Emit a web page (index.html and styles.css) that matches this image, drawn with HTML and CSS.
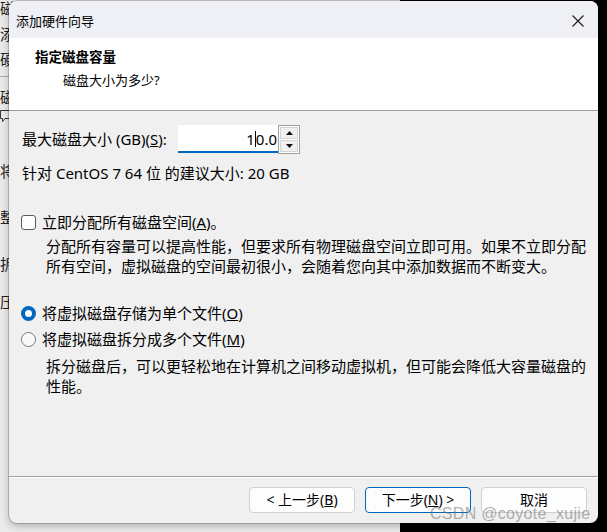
FILE: index.html
```html
<!DOCTYPE html>
<html lang="zh-CN">
<head>
<meta charset="utf-8">
<title>添加硬件向导</title>
<link rel="stylesheet" href="styles.css">
</head>
<body>
<div class="backdrop">
  <div class="bg-col">
    <span class="bg-ch c1">磁</span>
    <span class="bg-ch c2">添</span>
    <span class="bg-ch c3">硬</span>
    <span class="bg-rule"></span>
    <span class="bg-ch c4">磁</span>
    <span class="bg-ch c5"><svg width="10" height="14" viewBox="0 0 10 14"><path d="M0.5 1.5 H9.5 V9.5 H5 L2.5 12.5 V9.5 H0.5 Z" fill="none" stroke="#333" stroke-width="1"/></svg></span>
    <span class="bg-ch c6">将</span>
    <span class="bg-ch c7">整</span>
    <span class="bg-ch c8">拆</span>
    <span class="bg-ch c9">压</span>
  </div>
</div>

<div class="dialog">
  <div class="titlebar">
    <span class="title">添加硬件向导</span>
    <svg class="close" width="12" height="12" viewBox="0 0 12 12"><path d="M0.5 0.5 L11.5 11.5 M11.5 0.5 L0.5 11.5" stroke="#1a1a1a" stroke-width="1.1" fill="none"/></svg>
  </div>
  <div class="header">
    <div class="h-title">指定磁盘容量</div>
    <div class="h-sub">磁盘大小为多少?</div>
  </div>
  <div class="content">
    <div class="size-row">
      <span class="label">最大磁盘大小 (GB)(<u>S</u>):</span>
      <div class="input"><span>1</span><span class="caret"></span><span>0.0</span></div>
      <div class="spin">
        <div class="spin-btn"><svg width="7" height="4" viewBox="0 0 7 4"><path d="M0 4 L3.5 0 L7 4 Z" fill="#111"/></svg></div>
        <div class="spin-btn"><svg width="7" height="4" viewBox="0 0 7 4"><path d="M0 0 L3.5 4 L7 0 Z" fill="#111"/></svg></div>
      </div>
    </div>
    <div class="line rec">针对 CentOS 7 64 位 的建议大小: 20 GB</div>
    <div class="opt check-row"><span class="checkbox"></span><span>立即分配所有磁盘空间(<u>A</u>)。</span></div>
    <div class="desc d1">分配所有容量可以提高性能，但要求所有物理磁盘空间立即可用。如果不立即分配所有空间，虚拟磁盘的空间最初很小，会随着您向其中添加数据而不断变大。</div>
    <div class="opt radio-row r1"><span class="radio on"></span><span>将虚拟磁盘存储为单个文件(<u>O</u>)</span></div>
    <div class="opt radio-row r2"><span class="radio"></span><span>将虚拟磁盘拆分成多个文件(<u>M</u>)</span></div>
    <div class="desc d2">拆分磁盘后，可以更轻松地在计算机之间移动虚拟机，但可能会降低大容量磁盘的性能。</div>
  </div>
  <div class="footer">
    <button class="btn">&lt; 上一步(<u>B</u>)</button>
    <button class="btn primary">下一步(<u>N</u>) &gt;</button>
    <button class="btn">取消</button>
  </div>
  <div class="watermark">CSDN @coyote_xujie</div>
</div>
</body>
</html>
```
FILE: styles.css
```css
* { box-sizing: border-box; }
html, body { margin: 0; padding: 0; }
body {
  width: 607px;
  height: 532px;
  background: #000;
  position: relative;
  overflow: hidden;
  font-family: "Noto Sans", "Noto Sans CJK SC", sans-serif;
  color: #000;
}
.backdrop {
  position: absolute;
  left: 0;
  top: 0;
  width: 400px;
  height: 532px;
  background: #ebebeb;
}
.bg-col {
  display: flex;
  flex-direction: column;
  font-family: "Noto Sans CJK SC", sans-serif;
  font-size: 15px;
  line-height: 18px;
  color: #222;
}
.bg-ch { display: block; height: 18px; }
.c1 { margin-top: -1px; }
.c2 { margin-top: 8px; }
.c3 { margin-top: 7px; }
.bg-rule { display: block; height: 1px; background: #a8a8a8; margin-top: 8px; }
.c4 { margin-top: 11px; }
.c5 { margin-top: 2px; }
.c6 { margin-top: 36px; }
.c7 { margin-top: 28px; }
.c8 { margin-top: 29px; }
.c9 { margin-top: 20px; }

.dialog {
  position: absolute;
  left: 9px;
  top: 1px;
  width: 589px;
  height: 522px;
  background: #f0f0f0;
  border-radius: 8px;
  overflow: hidden;
  display: flex;
  flex-direction: column;
  box-shadow: 0 0 0 1px rgba(0,0,0,0.18), 0 3px 8px rgba(0,0,0,0.25);
}
.titlebar {
  height: 37px;
  background: #eef0f5;
  display: flex;
  align-items: center;
  justify-content: space-between;
  padding: 0 14px 0 7px;
  flex-shrink: 0;
}
.title { font-size: 13px; line-height: 16px; padding-top: 2px; }
.close { margin-top: 2px; }

.header {
  height: 73px;
  background: #fff;
  border-bottom: 1px solid #a0a0a0;
  flex-shrink: 0;
  display: flex;
  flex-direction: column;
}
.h-title {
  font-size: 13.5px;
  font-weight: bold;
  line-height: 18px;
  margin: 10px 0 0 26px;
}
.h-sub {
  font-size: 13px;
  line-height: 18px;
  margin: 5px 0 0 54px;
}

.content {
  flex: 1;
  display: flex;
  flex-direction: column;
  padding-left: 13px;
  font-size: 15px;
  line-height: 20px;
}
.size-row {
  margin-top: 14px;
  height: 28px;
  display: flex;
  align-items: center;
}
.label { width: 156px; }
.input {
  width: 100px;
  height: 28px;
  background: #fff;
  border-bottom: 2px solid #0067c0;
  display: flex;
  align-items: center;
  justify-content: flex-end;
  padding-right: 1px;
  padding-top: 1px;
}
.caret {
  display: inline-block;
  width: 1px;
  height: 16px;
  background: #000;
}
.spin {
  width: 22px;
  height: 29px;
  margin-top: 1px;
  border: 1px solid #a0a0a0;
  display: flex;
  flex-direction: column;
  gap: 1px;
  padding: 1px;
  background: #fff;
}
.spin-btn {
  flex: 1;
  background: #f0f0f0;
  border: 1px solid #d4d4d4;
  display: flex;
  align-items: center;
  justify-content: center;
}
.rec { margin-top: 10px; }
.opt {
  display: flex;
  align-items: center;
  gap: 6px;
  height: 20px;
}
.check-row { margin-top: 29px; margin-left: -1px; }
.checkbox {
  width: 15px;
  height: 15px;
  border: 1px solid #5a5a5a;
  border-radius: 3px;
  background: #fdfdfd;
  flex-shrink: 0;
}
.desc {
  margin-left: 24px;
  margin-right: 8px;
}
.d1 { margin-top: 4px; }
.r1 { margin-top: 27px; margin-left: -1px; }
.r2 { margin-top: 6px; margin-left: -1px; }
.radio {
  width: 15px;
  height: 15px;
  border-radius: 50%;
  border: 1px solid #7a7a7a;
  background: #f8f8f8;
  flex-shrink: 0;
}
.radio.on {
  border: 4.5px solid #0067c0;
  background: #fff;
}
.d2 { margin-top: 7px; }

.footer {
  height: 47px;
  flex-shrink: 0;
  border-top: 1px solid #a0a0a0;
  box-shadow: inset 0 1px 0 #fff;
  display: flex;
  justify-content: flex-end;
  align-items: flex-start;
  gap: 10px;
  padding: 10px 11px 0 0;
}
.btn {
  width: 106px;
  height: 26px;
  background: #fdfdfd;
  border: 1px solid #d0d0d0;
  border-radius: 4px;
  font-family: "Noto Sans", "Noto Sans CJK SC", sans-serif;
  font-size: 14px;
  line-height: 18px;
  color: #000;
  padding: 0;
}
.btn.primary { border-color: #0067c0; }
.watermark {
  position: absolute;
  left: 421px;
  top: 504px;
  font-family: "Liberation Sans", Arial, sans-serif;
  font-size: 16px;
  line-height: 18px;
  color: rgba(110,110,110,0.55);
  letter-spacing: 0.3px;
}
```
